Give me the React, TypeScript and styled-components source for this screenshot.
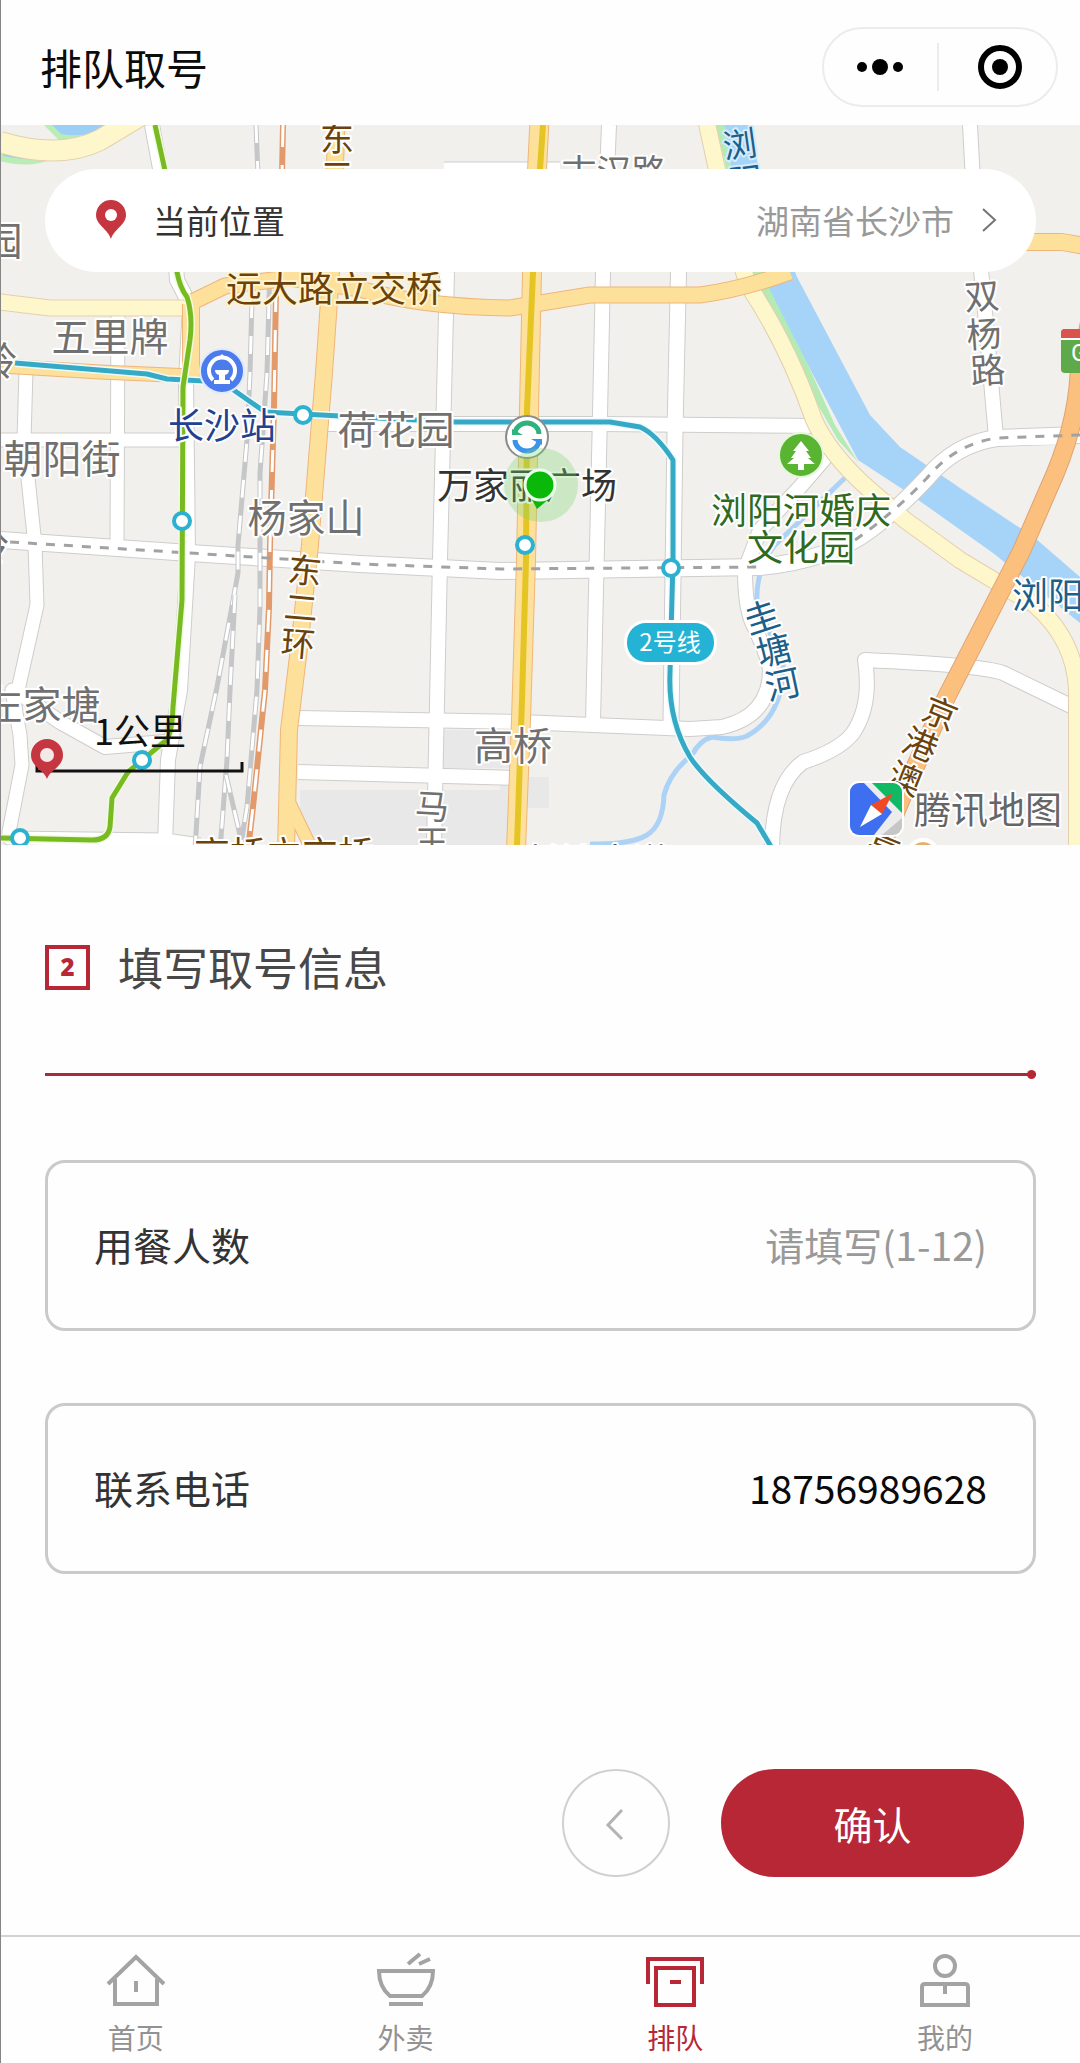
import React, { useState } from "react";
import styled, { createGlobalStyle } from "styled-components";

const red = "#b72736";
const grey = "#a3a3a3";

const GlobalStyle = createGlobalStyle`
  * { box-sizing: border-box; }
  body { margin: 0; background: #fefefe; }
  body, button, input {
    font-family: "Noto Sans CJK SC", "Noto Sans", sans-serif;
  }
  button { padding: 0; cursor: pointer; }
`;

const Page = styled.div`
  min-height: 100vh;
  display: flex;
  flex-direction: column;
  border-left: 1px solid #858585;
  background: #fefefe;
`;

const Header = styled.header`
  height: 125px;
  padding: 8px 22px 0 39px;
  display: flex;
  align-items: center;
  justify-content: space-between;
`;

const Title = styled.h1`
  margin: 0;
  font-size: 42px;
  line-height: 60px;
  font-weight: 400;
  color: #0c0c0c;
`;

const Capsule = styled.div`
  width: 236px;
  height: 80px;
  display: flex;
  align-items: center;
  border: 2px solid #ececec;
  border-radius: 40px;
`;

const CapsuleButton = styled.button`
  flex: 1;
  height: 48px;
  display: flex;
  align-items: center;
  justify-content: center;
  border: 0;
  background: none;

  & + & {
    padding-left: 4px;
    border-left: 2px solid #ececec;
  }
`;

const MapArea = styled.section`
  position: relative;
  height: 720px;
  overflow: hidden;
  background: #f2f0ed;
`;

const MapCanvas = styled.svg`
  display: block;
  width: 100%;
  height: 100%;
`;

const LocationBar = styled.button`
  position: absolute;
  top: 44px;
  left: 44px;
  right: 44px;
  height: 103px;
  padding: 0 38px 2px 49px;
  display: flex;
  align-items: center;
  border: 0;
  border-radius: 52px;
  background: #fff;
  font-size: 33px;
  line-height: 48px;
  color: #333;
`;

const LocationName = styled.span`
  margin-left: 25px;
`;

const LocationValue = styled.span`
  margin-left: auto;
  margin-right: 26px;
  color: #999;
`;

const Form = styled.form`
  padding: 98px 44px 0;
`;

const Step = styled.div`
  display: flex;
  align-items: center;
  gap: 28px;
`;

const StepNumber = styled.span`
  width: 45px;
  height: 45px;
  display: flex;
  align-items: center;
  justify-content: center;
  border: 4px solid ${red};
  font: 800 24px/30px "Open Sans", "Noto Sans", sans-serif;
  color: ${red};
`;

const StepTitle = styled.h2`
  margin: 0;
  font-size: 45px;
  line-height: 48px;
  font-weight: 400;
  color: #484848;
`;

const Rule = styled.div`
  position: relative;
  height: 3px;
  margin: 82px 0 84px;
  background: #a62c3b;

  &::after {
    content: "";
    position: absolute;
    right: 0;
    top: -3px;
    width: 9px;
    height: 9px;
    border-radius: 50%;
    background: ${red};
  }
`;

const Fields = styled.div`
  display: flex;
  flex-direction: column;
  gap: 72px;
`;

const Field = styled.label`
  height: 171px;
  padding: 0 46px 4px;
  display: flex;
  align-items: center;
  border: 3px solid #cacaca;
  border-radius: 20px;
  font-size: 39px;
  line-height: 56px;
  color: #333;
`;

const FieldInput = styled.input`
  flex: 1;
  min-width: 0;
  height: 56px;
  padding: 0;
  border: 0;
  outline: 0;
  background: none;
  font-size: 39px;
  text-align: right;
  color: #0a0a0a;

  &::placeholder {
    color: #999;
    opacity: 1;
  }
`;

const Actions = styled.div`
  display: flex;
  justify-content: flex-end;
  gap: 51px;
  margin: 195px 12px 0;
`;

const BackButton = styled.button`
  width: 108px;
  height: 108px;
  display: flex;
  align-items: center;
  justify-content: center;
  border: 2px solid #d0d0d0;
  border-radius: 50%;
  background: none;
`;

const ConfirmButton = styled.button`
  width: 303px;
  height: 108px;
  border: 0;
  border-radius: 54px;
  background: ${red};
  font-size: 39px;
  line-height: 56px;
  color: #fff;
`;

const TabBar = styled.nav`
  margin-top: auto;
  height: 128px;
  padding-top: 14px;
  display: grid;
  grid-template-columns: repeat(4, 1fr);
  border-top: 2px solid #d2d2d2;
`;

const Tab = styled.a<{ $active?: boolean }>`
  display: flex;
  flex-direction: column;
  align-items: center;
  gap: 8px;
  font-size: 28px;
  line-height: 36px;
  text-decoration: none;
  color: ${(p) => (p.$active ? red : grey)};
`;

const TabLabel = styled.span<{ $active?: boolean }>`
  color: ${(p) => (p.$active ? red : "#929292")};
`;

const TabIcon = styled.svg`
  width: 60px;
  height: 60px;
  fill: none;
  stroke: currentColor;
  stroke-width: 4;
`;

const MapText = styled.text`
  font-family: "Noto Sans CJK SC", sans-serif;
  text-anchor: middle;
  paint-order: stroke;
  stroke-linejoin: round;
`;

/* ---------- map data ---------- */

type Road = [path: string, width: number];

const streets: Road[] = [
  ["M0 440H186", 13],
  ["M118 300L117 548", 13],
  ["M26 370L24 440L35 545L37 605L18 690L12 690L20 735L22 765L9 832L9 838L165 840L200 845", 13],
  ["M12 688L60 722L105 747L165 742", 14],
  ["M152 125L175 250L177 280L190 305L186 380L188 555L180 690L168 760L165 845", 14],
  ["M447 272L440 560L434 845", 14],
  ["M444 171H560", 17],
  ["M609 125L603 272L600 415L593 722", 14],
  ["M679 250L675 430L671 722", 15],
  ["M328 424H600L822 426", 14],
  ["M298 718L520 722L690 729L722 727Q770 716 770 670Q768 655 752 622Q745 605 745 570", 14],
  ["M298 772L520 778", 14],
  ["M970 125L974 200L984 300L996 438", 14],
  ["M832 450L800 487L760 530L745 570", 14],
  ["M1075 708L1003 673Q980 665 865 660Q872 705 853 733Q840 750 803 762Q772 785 772 850", 14],
  ["M0 540L190 553L360 564L500 571L760 567Q830 560 870 530Q895 512 927 478Q955 444 997 438L1080 435", 16],
];

const paleRoads: Road[] = [
  ["M0 142Q60 160 100 140L150 110", 20],
  ["M0 302L50 308H184", 15],
  ["M704 110L728 220L748 285Q788 345 814 420Q830 455 870 490L905 520L960 560L1035 605Q1075 640 1077 690V850", 16],
];

const mainRoads: Road[] = [
  ["M0 366L100 372L192 376", 13],
  ["M191 378V304", 16],
  ["M186 305L225 286L290 278L360 289Q420 307 510 308L590 295H700Q740 290 790 272", 15],
  ["M1020 242H1062L1090 247", 16],
  ["M337 110L331 272L324 373L310 545L300 640L289 730L286 850", 16],
  ["M288 800L312 850", 12],
  ["M540 110L532 272L529 410L526 560L521 720L516 850", 18],
];

const highway: Road = ["M1090 320L1079 375Q1076 430 1048 490L1022 550L945 700L905 790L880 850", 17];

const rails = [
  "M256 125L258 175",
  "M252 300L250 373L247 440L238 545V573L230 617L217 687L200 767L195 850",
  "M270 265L267 373L260 473V607L257 690L247 807L240 850",
  "M235 595L230 690L227 760L220 850",
  "M226 775L240 835",
];

const orangeRails = ["M283 125L282 175", "M276 290L274 407L270 545L269 607L265 690L253 807L248 850"];

const stations: [number, number][] = [
  [303, 415],
  [182, 521],
  [525, 545],
  [671, 568],
  [142, 760],
  [20, 838],
];

type LabelProps = {
  x: number;
  y: number;
  size?: number;
  color?: string;
  rotate?: number;
  halo?: string;
  children: string;
};

function Label({ x, y, size = 39, color = "#707070", rotate = 0, halo = "#fff", children }: LabelProps) {
  return (
    <MapText
      x={x}
      y={y + Math.round(size * 0.34)}
      fontSize={size}
      fill={color}
      stroke={halo}
      strokeWidth={4}
      transform={rotate ? `rotate(${rotate} ${x} ${y})` : undefined}
    >
      {children}
    </MapText>
  );
}

function Roads({ roads, fill, edge }: { roads: Road[]; fill: string; edge: string }) {
  return (
    <g fill="none" strokeLinejoin="round">
      {roads.map(([d, w]) => (
        <path key={`e${d}`} d={d} stroke={edge} strokeWidth={w + 2} />
      ))}
      {roads.map(([d, w]) => (
        <path key={`f${d}`} d={d} stroke={fill} strokeWidth={w} />
      ))}
    </g>
  );
}

const brown = "#6b430a";
const water = "#1c5f8a";
const line1 =
  "M155 125L166 175L177 272Q180 288 187 297Q193 315 190 340L183 387L182 600L173 707Q172 738 164 742L128 772L112 798L110 827Q108 840 92 840L0 838";
const line2 =
  "M15 363L147 374L167 379L222 382L235 391L265 412L340 416L455 422H610L640 427Q656 434 673 460V560L670 673Q668 720 690 757Q705 780 757 823L773 850";

function CityMap() {
  return (
    <MapCanvas viewBox="1 125 1079 720" preserveAspectRatio="xMidYMid slice" role="img" aria-label="地图">
      <rect y={125} width={1080} height={720} fill="#f2f0ed" />
      <g fill="#e8e8e8">
        <path d="M300 790H515V845H300Z M443 730H515V768H443Z M500 777H549V808H500Z" />
      </g>
      <path d="M0 158Q30 166 52 156L40 148L0 142Z M48 125L60 137Q90 142 112 128V120H48Z" fill="#9ccff5" stroke="#b9edb5" strokeWidth={6} />

      <path
        d="M720 110L730 185L768 290L800 350L858 460L907 492L993 553L1080 623V577L1035 538L960 488L900 447L870 415L797 277L760 180L750 110Z"
        fill="#a6d3f8"
      />
      <path d="M712 110L722 110L735 190L770 290L808 365L835 425L858 462L838 440L815 400L786 335L755 285Z" fill="#b4ebb5" />
      <g fill="none" stroke="#acd2f5" strokeWidth={5}>
        <path d="M848 475L775 545Q755 570 757 605L783 660Q785 715 747 736Q735 741 712 737Q700 740 692 755Q670 772 664 795Q663 825 647 835Q630 845 590 844" />
      </g>

      <Roads roads={streets} fill="#fff" edge="#cfcdcc" />

      <g fill="none" strokeWidth={5}>
        {rails.map((d) => (
          <g key={d}>
            <path d={d} stroke="#c4c6c8" />
            <path d={d} stroke="#fff" strokeWidth={3} strokeDasharray="18 18" />
          </g>
        ))}
        {orangeRails.map((d) => (
          <g key={d}>
            <path d={d} stroke="#e39a6b" strokeWidth={6} />
            <path d={d} stroke="#fff" strokeWidth={3} strokeDasharray="22 18" />
          </g>
        ))}
      </g>

      <Roads roads={paleRoads} fill="#fff7cc" edge="#e3cfae" />
      <Roads roads={mainRoads} fill="#fde09a" edge="#efb57b" />
      <path d="M1060 437L997 438Q955 444 927 478Q895 512 870 530" fill="none" stroke="#fff" strokeWidth={15} />
      <Roads roads={[highway]} fill="#fbc07e" edge="#dea273" />
      <path
        d="M10 542L190 553L360 564L500 569L760 567M855 540Q895 512 927 478Q955 444 997 438L1080 435"
        fill="none"
        stroke="#a2a2a2"
        strokeWidth={3}
        strokeDasharray="9 9"
      />

      <g fill="none" strokeLinejoin="round">
        <path d="M543 125L533 272L527 410L526 560L522 700L517 845" stroke="#e5c524" strokeWidth={6} />
        <path d={line2} stroke="#eefaff" strokeWidth={8} />
        <path d={line2} stroke="#36aac4" strokeWidth={5} />
        <path d={line1} stroke="#f0fae0" strokeWidth={8} />
        <path d={line1} stroke="#78bb20" strokeWidth={5} />
      </g>
      {stations.map(([x, y]) => (
        <circle key={`${x}-${y}`} cx={x} cy={y} r={8} fill="#fff" stroke="#2cb1d0" strokeWidth={4} />
      ))}

      <Label x={110} y={338}>五里牌</Label>
      <Label x={62} y={460}>朝阳街</Label>
      <Label x={306} y={519}>杨家山</Label>
      <Label x={396} y={431}>荷花园</Label>
      <Label x={42} y={706}>左家塘</Label>
      <Label x={513} y={747}>高桥</Label>
      <Label x={3} y={242}>园</Label>
      <Label x={-2} y={362}>岭</Label>
      <Label x={-10} y={547}>岭</Label>
      <Label x={614} y={173} size={35}>古汉路</Label>
      <Label x={222} y={427} size={36} color="#23418f">长沙站</Label>
      <Label x={527} y={487} size={36} color="#333">万家丽广场</Label>
      <Label x={334} y={290} size={36} color={brown} halo="#fff3cf">远大路立交桥</Label>
      <Label x={284} y={856} size={36} color={brown}>高桥立交桥</Label>
      <Label x={597} y={863} size={36} color="#555">长沙大道</Label>
      <Label x={801} y={512} size={36} color="#2f6a20">浏阳河婚庆</Label>
      <Label x={801} y={549} size={36} color="#2f6a20">文化园</Label>
      <Label x={1066} y={597} size={36} color={water}>浏阳河</Label>

      <Label x={337} y={139} size={34} color={brown}>东</Label>
      <Label x={337} y={175} size={34} color={brown}>二</Label>
      <Label x={305} y={571} size={34} color={brown} rotate={6}>东</Label>
      <Label x={301} y={608} size={34} color={brown} rotate={5}>二</Label>
      <Label x={298} y={644} size={34} color={brown} rotate={5}>环</Label>

      <Label x={982} y={297} size={35} rotate={-4}>双</Label>
      <Label x={984} y={335} size={35} rotate={-4}>杨</Label>
      <Label x={988} y={371} size={35} rotate={-4}>路</Label>
      <Label x={432} y={807} size={34} rotate={3}>马</Label>
      <Label x={432} y={843} size={34}>王</Label>

      <Label x={740} y={145} size={34} color={water} halo="#d5ecff" rotate={-8}>浏</Label>
      <Label x={746} y={181} size={34} color={water} halo="#d5ecff" rotate={-8}>阳</Label>
      <Label x={762} y={618} size={35} color={water} rotate={-18}>圭</Label>
      <Label x={774} y={651} size={35} color={water} rotate={-14}>塘</Label>
      <Label x={783} y={685} size={35} color={water} rotate={-12}>河</Label>

      <Label x={940} y={714} size={34} color={brown} rotate={22}>京</Label>
      <Label x={920} y={745} size={34} color={brown} rotate={22}>港</Label>
      <Label x={905} y={779} size={34} color={brown} rotate={22}>澳</Label>
      <Label x={882} y={849} size={34} color={brown} rotate={22}>高</Label>

      {/* line badge */}
      <rect x={624} y={620} width={93} height={45} rx={22} fill="#fff" />
      <rect x={627} y={623} width={87} height={39} rx={19} fill="#24b3d4" />
      <MapText x={670} y={651} fontSize={24} fill="#fff">2号线</MapText>

      {/* railway station */}
      <circle cx={222} cy={371} r={22} fill="#4c7cec" stroke="#dfe9ff" strokeWidth={2} />
      <path d="M213 380A13 13 0 1 1 231 380" fill="none" stroke="#fff" strokeWidth={4} />
      <path d="M217 359L222 354L227 359Z M215 370H229Q229 374 225 375V380H230V384H214V380H219V375Q215 374 215 370Z" fill="#fff" />

      {/* interchange */}
      <circle cx={527} cy={437} r={21} fill="#fff" stroke="#8c8c8c" strokeWidth={2} />
      <path d="M515 434A12 11 0 0 1 539 434" fill="none" stroke="#2eb37c" strokeWidth={5} />
      <path d="M539 440A12 11 0 0 1 515 440" fill="none" stroke="#3b93ea" strokeWidth={5} />
      <path d="M512 435V429L523 435Z" fill="#2eb37c" />
      <path d="M542 439V445L531 439Z" fill="#3b93ea" />

      {/* current position */}
      <circle cx={541} cy={485} r={37} fill="rgba(120, 210, 110, 0.32)" />
      <path d="M530 496L537 509L550 498Z" fill="#0ab80a" />
      <circle cx={540} cy={485} r={15} fill="#0ab80a" stroke="#eaffea" strokeWidth={3} />

      {/* park */}
      <circle cx={801} cy={455} r={22} fill="#59b432" stroke="#e6f7dc" strokeWidth={2} />
      <path d="M801 441L809 451H806L811 458H808L815 464H804V470H798V464H787L794 458H791L796 451H793Z" fill="#fff" />

      {/* expressway shield */}
      <rect x={1061} y={329} width={60} height={44} rx={4} fill="#5eaa4b" />
      <path d="M1061 338V333Q1061 329 1065 329H1090V338Z" fill="#d9544d" />
      <path d="M1061 339H1090" stroke="#fff" strokeWidth={2} />
      <text x={1071} y={361} fontFamily="Roboto, sans-serif" fontSize={24} fill="#fff">G</text>

      <circle cx={923} cy={855} r={15} fill="#e2b26c" stroke="#fff" strokeWidth={4} />

      {/* scale */}
      <path d="M37 764V771H242V762" fill="none" stroke="#111" strokeWidth={3} />
      <MapText x={140} y={745} fontSize={36} fill="#111">1公里</MapText>
      <path d="M47 779C44 770 31 767 31 755A16 16 0 0 1 63 755C63 767 50 770 47 779Z" fill="#c63640" />
      <circle cx={47} cy={755} r={7} fill="#f5e9e8" />

      {/* provider mark */}
      <clipPath id="mark">
        <rect x={850} y={783} width={52} height={52} rx={9} />
      </clipPath>
      <rect x={848} y={781} width={56} height={56} rx={11} fill="#fff" />
      <g clipPath="url(#mark)">
        <rect x={850} y={783} width={52} height={52} fill="#ececec" />
        <path d="M850 783H864L892 812L874 835H850Z" fill="#3d6ff0" />
        <path d="M872 783H902V813Z" fill="#12b965" />
        <path d="M902 818V835H882Z" fill="#c6c6c6" />
        <path d="M893 793L871 805L882 814Z" fill="#f04a24" />
        <path d="M860 827L871 805L882 814Z" fill="#fff" />
      </g>
      <Label x={988} y={811} size={37} color="#666">腾讯地图</Label>
    </MapCanvas>
  );
}

/* ---------- page ---------- */

export default function App() {
  const [guests, setGuests] = useState("");
  const [phone, setPhone] = useState("18756989628");

  return (
    <Page>
      <GlobalStyle />
      <Header>
        <Title>排队取号</Title>
        <Capsule>
          <CapsuleButton type="button" aria-label="更多">
            <svg width="50" height="20" viewBox="0 0 50 20">
              <circle cx="6" cy="10" r="5" />
              <circle cx="24" cy="10" r="8" />
              <circle cx="42" cy="10" r="5" />
            </svg>
          </CapsuleButton>
          <CapsuleButton type="button" aria-label="关闭">
            <svg width="46" height="46" viewBox="0 0 46 46">
              <circle cx="23" cy="23" r="19" fill="none" stroke="#000" strokeWidth="6" />
              <circle cx="23" cy="23" r="8" />
            </svg>
          </CapsuleButton>
        </Capsule>
      </Header>

      <MapArea>
        <CityMap />
        <LocationBar type="button">
          <svg width="34" height="42" viewBox="0 0 34 42">
            <path d="M17 40C14 30 2 26 2 16A15 15 0 0 1 32 16C32 26 20 30 17 40Z" fill="#c63640" />
            <circle cx="17" cy="16" r="6" fill="#fff" />
          </svg>
          <LocationName>当前位置</LocationName>
          <LocationValue>湖南省长沙市</LocationValue>
          <svg width="18" height="28" viewBox="0 0 18 28" fill="none" stroke="#757575" strokeWidth="2">
            <path d="M3 3L15 14L3 25" />
          </svg>
        </LocationBar>
      </MapArea>

      <Form onSubmit={(e) => e.preventDefault()}>
        <Step>
          <StepNumber>2</StepNumber>
          <StepTitle>填写取号信息</StepTitle>
        </Step>
        <Rule />
        <Fields>
          <Field htmlFor="guests">
            用餐人数
            <FieldInput
              id="guests"
              inputMode="numeric"
              placeholder="请填写(1-12)"
              value={guests}
              onChange={(e) => setGuests(e.target.value)}
            />
          </Field>
          <Field htmlFor="phone">
            联系电话
            <FieldInput id="phone" type="tel" value={phone} onChange={(e) => setPhone(e.target.value)} />
          </Field>
        </Fields>
        <Actions>
          <BackButton type="button" aria-label="返回">
            <svg width="22" height="36" viewBox="0 0 22 36" fill="none" stroke="#b3b3b3" strokeWidth="3">
              <path d="M17 5L3 20L17 34" />
            </svg>
          </BackButton>
          <ConfirmButton type="submit">确认</ConfirmButton>
        </Actions>
      </Form>

      <TabBar>
        <Tab href="#home">
          <TabIcon viewBox="0 0 60 60">
            <path d="M2 33L30 6L58 33M9 28V53H51V28M30 30V41" />
          </TabIcon>
          <TabLabel>首页</TabLabel>
        </Tab>
        <Tab href="#takeout">
          <TabIcon viewBox="0 0 60 60">
            <path d="M3 20H57Q57 36 46 45H14Q3 36 3 20ZM13 53H47M32 13L44 3M43 13L54 8" />
          </TabIcon>
          <TabLabel>外卖</TabLabel>
        </Tab>
        <Tab href="#queue" $active aria-current="page">
          <TabIcon viewBox="0 0 60 60">
            <path d="M3 33V8H57V33M11 17H49V54H11ZM25 31H36" />
          </TabIcon>
          <TabLabel $active>排队</TabLabel>
        </Tab>
        <Tab href="#me">
          <TabIcon viewBox="0 0 60 60">
            <circle cx="30" cy="15" r="10" />
            <path d="M7 54V36Q7 33 10 33H50Q53 33 53 36V54ZM30 33V43" />
          </TabIcon>
          <TabLabel>我的</TabLabel>
        </Tab>
      </TabBar>
    </Page>
  );
}
